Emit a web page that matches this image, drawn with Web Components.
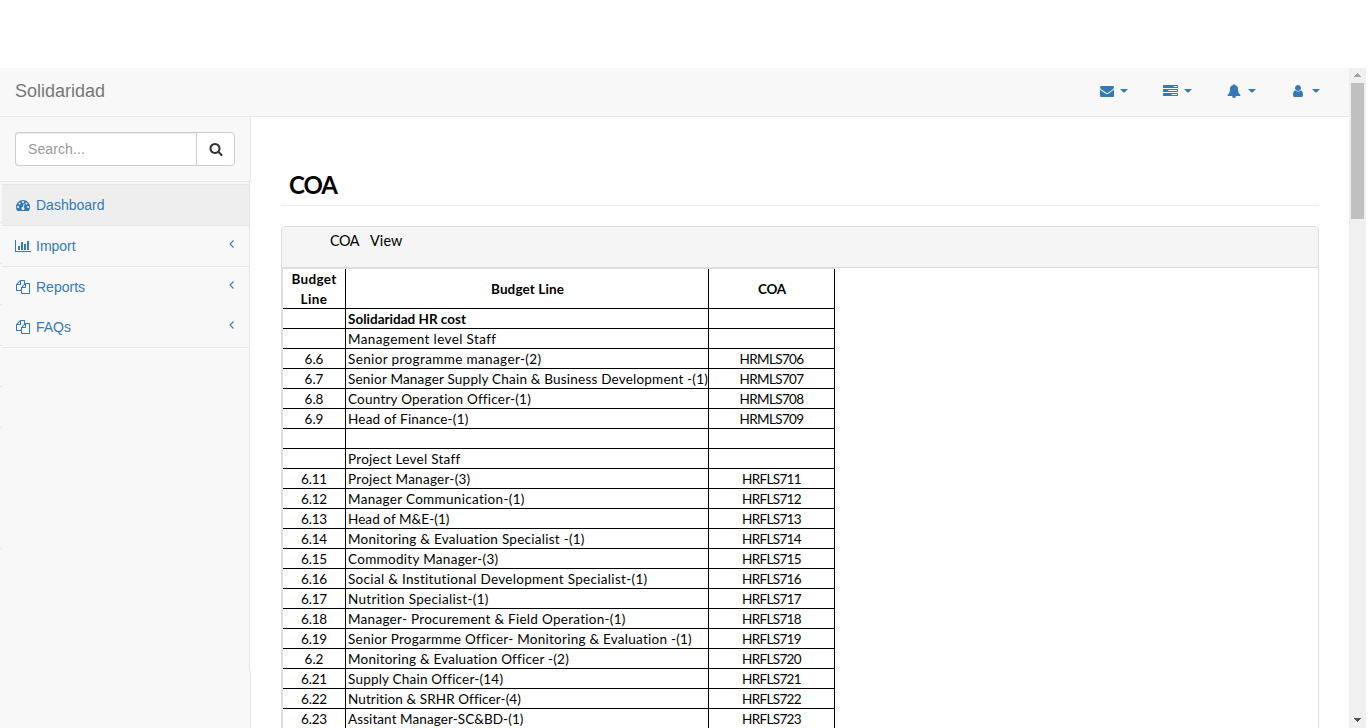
<!DOCTYPE html>
<html lang="en">
<head>
<meta charset="utf-8">
<title>Solidaridad - COA</title>
<style>
html,body{margin:0;height:100%;overflow:hidden;background:#fff}
body{font:14px/20px "Liberation Sans",Arial,sans-serif;color:#333}
</style>
</head>
<body>
<coa-app></coa-app>
<script>
const ICONS = {
  envelope:[1792,'M1792 710v794q0 66-47 113t-113 47h-1472q-66 0-113-47t-47-113v-794q44 49 101 87 362 246 497 345 57 42 92.500 65.500t94.500 48 110 24.500h2q51 0 110-24.500t94.500-48 92.500-65.500q170-123 498-345 57-39 100-87zm0-294q0 79-49 151t-122 123q-376 261-468 325-10 7-42.500 31t-54 38-52 32.500-57.500 27-50 9h-2q-23 0-50-9t-57.500-27-52-32.500-54-38-42.500-31q-91-64-262-182.500t-205-142.500q-62-42-117-115.500t-55-136.500q0-78 41.500-130t118.500-52h1472q65 0 112.500 47t47.500 113z'],
  tasks:[1792,'M1024 1408h640v-128h-640v128zm-384-512h1024v-128h-1024v128zm640-512h384v-128h-384v128zm512 832v256q0 26-19 45t-45 19h-1664q-26 0-45-19t-19-45v-256q0-26 19-45t45-19h1664q26 0 45 19t19 45zm0-512v256q0 26-19 45t-45 19h-1664q-26 0-45-19t-19-45v-256q0-26 19-45t45-19h1664q26 0 45 19t19 45zm0-512v256q0 26-19 45t-45 19h-1664q-26 0-45-19t-19-45v-256q0-26 19-45t45-19h1664q26 0 45 19t19 45z'],
  bell:[1792,'M912 1696q0-16-16-16-59 0-101.500-42.500t-42.500-101.500q0-16-16-16t-16 16q0 73 51.500 124.500t124.500 51.500q16 0 16-16zm816-288q0 52-38 90t-90 38h-448q0 106-75 181t-181 75-181-75-75-181h-448q-52 0-90-38t-38-90q50-42 91-88t85-119.500 74.500-158.500 50-206 19.500-260q0-152 117-282.500t307-158.500q-8-19-8-39 0-40 28-68t68-28 68 28 28 68q0 20-8 39 190 28 307 158.500t117 282.500q0 139 19.500 260t50 206 74.500 158.500 85 119.500 91 88z'],
  user:[1792,'M1536 1399q0 109-62.500 187t-150.500 78h-854q-88 0-150.500-78t-62.500-187q0-85 8.500-160.500t31.500-152 58.500-131 94-89 134.500-34.500q131 128 313 128t313-128q76 0 134.500 34.500t94 89 58.500 131 31.500 152 8.500 160.500zm-256-887q0 159-112.500 271.500t-271.500 112.500-271.500-112.500-112.500-271.500 112.500-271.500 271.500-112.500 271.500 112.500 112.500 271.500z'],
  search:[1792,'M1216 832q0-185-131.500-316.500t-316.500-131.500-316.500 131.500-131.500 316.500 131.500 316.500 316.500 131.500 316.500-131.500 131.500-316.500zm512 832q0 52-38 90t-90 38q-54 0-90-38l-343-342q-179 124-399 124-143 0-273.500-55.500t-225-150-150-225-55.500-273.500 55.500-273.500 150-225 225-150 273.500-55.500 273.500 55.500 225 150 150 225 55.500 273.500q0 220-124 399l343 343q37 37 37 90z'],
  dashboard:[1792,'M384 1152q0-53-37.500-90.500t-90.500-37.500-90.500 37.500-37.500 90.500 37.500 90.500 90.500 37.500 90.500-37.500 37.500-90.500zm192-448q0-53-37.500-90.500t-90.500-37.500-90.500 37.500-37.500 90.500 37.500 90.500 90.500 37.500 90.500-37.500 37.500-90.500zm428 481l101-382q6-26-7.500-48.500t-38.500-29.500-48 6.500-30 39.500l-101 382q-60 5-107 43.500t-63 98.500q-20 77 20 146t117 89 146-20 89-117q16-60-6-117t-72-91zm660-33q0-53-37.500-90.500t-90.500-37.500-90.500 37.500-37.500 90.500 37.500 90.500 90.500 37.500 90.500-37.500 37.500-90.500zm-640-640q0-53-37.500-90.500t-90.500-37.500-90.500 37.500-37.500 90.500 37.500 90.500 90.500 37.500 90.500-37.500 37.500-90.500zm448 192q0-53-37.500-90.500t-90.500-37.500-90.500 37.500-37.500 90.500 37.500 90.500 90.500 37.500 90.500-37.500 37.500-90.500zm320 448q0 261-141 483-19 29-54 29h-1402q-35 0-54-29-141-221-141-483 0-182 71-348t191-286 286-191 348-71 348 71 286 191 191 286 71 348z'],
  chart:[2048,'M640 896v512h-256v-512h256zm384-512v1024h-256v-1024h256zm1024 1152v128h-2048v-1536h128v1408h1920zm-640-896v768h-256v-768h256zm384-384v1152h-256v-1152h256z'],
  files:[1792,'M1696 384q40 0 68 28t28 68v1216q0 40-28 68t-68 28h-960q-40 0-68-28t-28-68v-288h-544q-40 0-68-28t-28-68v-672q0-40 20-88t48-76l408-408q28-28 76-48t88-20h416q40 0 68 28t28 68v328q68-40 128-40h416zm-544 213l-299 299h299v-299zm-640-384l-299 299h299v-299zm196 647l316-316v-416h-384v416q0 40-28 68t-68 28h-416v640h512v-256q0-40 20-88t48-76zm956 804v-1152h-384v416q0 40-28 68t-68 28h-416v640h896z']
};

class FaIcon extends HTMLElement{
  connectedCallback(){
    const [w,d]=ICONS[this.getAttribute('name')];
    this.attachShadow({mode:'open'}).innerHTML=`<style>:host{display:inline-block;width:${w/128}px;height:14px;flex:none}svg{display:block;width:100%;height:100%;fill:currentColor}</style><svg viewBox="0 0 ${w} 1792" preserveAspectRatio="none"><path d="${d}"/></svg>`;
  }
}
customElements.define('fa-icon',FaIcon);

/* Tracks its slotted text to the advance width given in "w". */
class FitText extends HTMLElement{
  connectedCallback(){
    this.attachShadow({mode:'open'}).innerHTML='<style>:host{display:inline-block;white-space:pre}</style><slot></slot>';
    const w=+this.getAttribute('w');
    if(w){
      const n=this.textContent.length;
      const ls=(w-this.getBoundingClientRect().width)/n;
      this.style.letterSpacing=ls.toFixed(3)+'px';
    }
  }
}
customElements.define('fit-text',FitText);

class NavMenu extends HTMLElement{
  connectedCallback(){
    this.attachShadow({mode:'open'}).innerHTML=`<style>
:host{display:flex;flex:none;align-items:center;width:64px;height:46px;color:#337ab7}
i{margin-left:5.5px;border:4.5px solid transparent;border-top-color:currentColor;border-bottom:0}
[name=tasks]{width:15px;margin-left:-1px}
[name=bell]{margin:0 1px 0 -1px}
[name=user]{margin:0 1.500px 0 -1.500px}
</style><fa-icon name="${this.getAttribute('icon')}"></fa-icon><i></i>`;
  }
}
customElements.define('nav-menu',NavMenu);

class TopBar extends HTMLElement{
  connectedCallback(){
    this.attachShadow({mode:'open'}).innerHTML=`<style>
:host{display:flex;justify-content:space-between;box-sizing:border-box;height:49px;background:#f8f8f8;border-bottom:1px solid #e7e7e7}
b{font:18px/20px "Liberation Sans",Arial,sans-serif;color:#777;padding:13px 0 0 15px}
nav{display:flex;width:249px}
</style><b><fit-text w="90">Solidaridad</fit-text></b><nav><nav-menu icon="envelope"></nav-menu><nav-menu icon="tasks"></nav-menu><nav-menu icon="bell"></nav-menu><nav-menu icon="user"></nav-menu></nav>`;
  }
}
customElements.define('top-bar',TopBar);

class SideItem extends HTMLElement{
  connectedCallback(){
    this.attachShadow({mode:'open'}).innerHTML=`<style>
:host{display:flex;box-sizing:border-box;height:41px;margin-left:2px;padding:10px 15px 0 13px;color:#337ab7;border-bottom:1px solid #e7e7e7}
:host([active]){background:#eee}
:host([plain]){border-bottom:0;height:40px}
fa-icon{margin-top:3px}
.box{width:21px;display:flex}
span{flex:1}
svg{width:5px;height:8px;margin:4px 0 0;fill:none;stroke:currentColor;stroke-width:1.1}
</style><div class="box"><fa-icon name="${this.getAttribute('icon')}"></fa-icon></div><span><slot></slot></span>${this.hasAttribute('active')?'':'<svg viewBox="0 0 5 8"><path d="M4.500.5L1 4l3.500 3.500"/></svg>'}`;
    if(this.getAttribute('icon')!=='chart')this.shadowRoot.querySelector('fa-icon').style.marginLeft='1px';
  }
}
customElements.define('side-item',SideItem);

class SideBar extends HTMLElement{
  connectedCallback(){
    const stubs=[222,263,304,345,386,427,548];
    this.attachShadow({mode:'open'}).innerHTML=`<style>
:host{display:block;position:relative;width:251px;box-sizing:border-box;background:linear-gradient(#f8f8f8,#f8f8f8) 0 0/249px 100% no-repeat}
.search{display:flex;box-sizing:border-box;height:65px;padding:15px 15px;background:#f8f8f8;border-bottom:1px solid #e7e7e7;border-right:1px solid #e7e7e7}
.input{flex:1;box-sizing:border-box;height:34px;border:1px solid #ccc;border-right:0;border-radius:4px 0 0 4px;background:#fff;padding:6px 12px;color:#999;box-shadow:inset 0 1px 1px rgba(0,0,0,.075)}
.btn{display:flex;box-sizing:border-box;width:39px;height:34px;border:1px solid #ccc;border-radius:0 4px 4px 0;background:#fff;color:#333;padding:9px 11.500px}
.menu{box-sizing:border-box;width:250px;height:489px;border-right:1px solid #e7e7e7;padding-top:2px}
.line{height:1px;margin-left:2px;background:#e7e7e7}
.tail{box-sizing:border-box;width:251px;height:57px;background:#f8f8f8;border-right:1px solid #e7e7e7}
i{position:absolute;left:0;width:2px;height:1px;background:#e7e7e7}
</style>
<div class="search"><div class="input"><fit-text w="57">Search...</fit-text></div><div class="btn"><fa-icon name="search"></fa-icon></div></div>
<div class="menu"><div class="line"></div>
<side-item icon="dashboard" active>Dashboard</side-item>
<side-item icon="chart">Import</side-item>
<side-item icon="files" plain>Reports</side-item>
<side-item icon="files">FAQs</side-item></div>
<div class="tail"></div>
${stubs.map(y=>`<i style="top:${y-117}px"></i>`).join('')}`;
  }
}
customElements.define('side-bar',SideBar);

const ROWS=[
['','Solidaridad HR cost',118,''],['','Management level Staff',148,''],
['6.6','Senior programme manager-(2)',193.5,'HRMLS706'],
['6.7','Senior Manager Supply Chain & Business Development -(1)',360,'HRMLS707'],
['6.8','Country Operation Officer-(1)',182.5,'HRMLS708'],
['6.9','Head of Finance-(1)',120.5,'HRMLS709'],
['','',0,''],['','Project Level Staff',112,''],
['6.11','Project Manager-(3)',122.5,'HRFLS711'],
['6.12','Manager Communication-(1)',177,'HRFLS712'],
['6.13','Head of M&E-(1)',101.5,'HRFLS713'],
['6.14','Monitoring & Evaluation Specialist -(1)',237,'HRFLS714'],
['6.15','Commodity Manager-(3)',150.5,'HRFLS715'],
['6.16','Social & Institutional Development Specialist-(1)',300,'HRFLS716'],
['6.17','Nutrition Specialist-(1)',141,'HRFLS717'],
['6.18','Manager- Procurement & Field Operation-(1)',278,'HRFLS718'],
['6.19','Senior Progarmme Officer- Monitoring & Evaluation -(1)',343.5,'HRFLS719'],
['6.2','Monitoring & Evaluation Officer -(2)',220.5,'HRFLS720'],
['6.21','Supply Chain Officer-(14)',154.5,'HRFLS721'],
['6.22','Nutrition & SRHR Officer-(4)',172.5,'HRFLS722'],
['6.23','Assitant Manager-SC&BD-(1)',175.5,'HRFLS723']];

class BudgetTable extends HTMLElement{
  connectedCallback(){
    const esc=s=>s.replace(/&/g,'&amp;');
    const fit=(s,w)=>s?`<fit-text w="${w}">${esc(s)}</fit-text>`:'';
    this.attachShadow({mode:'open'}).innerHTML=`<style>
:host{display:block;width:552px;margin:1px 0 0 1px;font:13.500px/19px Lato,Carlito,sans-serif;color:#000}
.row{display:grid;grid-template-columns:63px 363px 126px;height:20px}
.row>div{box-sizing:border-box;border-right:1px solid #000;border-bottom:1px solid #000;overflow:hidden;white-space:nowrap;text-align:center;padding-top:1px}
.row>.name{text-align:left;padding-left:2px}
.head{height:40px;font-weight:700}
.head>div{line-height:20px;padding-top:0}
.head>div+div{padding:10px 0 0 1px}
.strong{font-weight:700}
</style>
<div class="row head"><div>${fit('Budget',45)}<br>${fit('Line',27)}</div><div>${fit('Budget Line',73)}</div><div>${fit('COA',28)}</div></div>
${ROWS.map((r,i)=>`<div class="row${i?'':' strong'}"><div>${fit(r[0],r[0].length>3?26:19)}</div><div class="name">${fit(r[1],r[2])}</div><div>${fit(r[3],r[3].startsWith('HRM')?64:59)}</div></div>`).join('')}`;
  }
}
customElements.define('budget-table',BudgetTable);

class CoaPanel extends HTMLElement{
  connectedCallback(){
    this.attachShadow({mode:'open'}).innerHTML=`<style>
:host{display:block;box-sizing:border-box;height:600px;border:1px solid #ddd;border-radius:4px 4px 0 0;overflow:hidden}
.heading{box-sizing:border-box;height:41px;background:#f5f5f5;border-bottom:1px solid #ddd;padding:4px 0 0 48px;font:14.400px/20px Lato,Carlito,sans-serif;color:#000;display:flex;gap:11px}
.body{width:553px;box-shadow:inset 1px 1px #ddd;display:flow-root}
</style><div class="heading"><fit-text w="29">COA</fit-text><fit-text w="32.5">View</fit-text></div><div class="body"><slot></slot></div>`;
  }
}
customElements.define('coa-panel',CoaPanel);

class ScrollBar extends HTMLElement{
  connectedCallback(){
    this.attachShadow({mode:'open'}).innerHTML=`<style>
:host{display:flex;flex-direction:column;align-items:center;width:17px;background:#f0f0f0}
svg{display:block;width:17px;height:15px}
.thumb{width:13px;height:136px;background:#c0c0c0}
.down{margin-top:auto;margin-bottom:1px}
</style><svg viewBox="0 0 17 15"><path fill="#a3a3a3" d="M8 5h1v1h1v1h1v1h1v1H5V8h1V7h1V6h1z"/></svg><div class="thumb"></div><svg class="down" viewBox="0 0 17 15"><path fill="#505050" d="M5 6h7v1h-1v1h-1v1H9v1H8V9H7V8H6V7H5z"/></svg>`;
  }
}
customElements.define('scroll-bar',ScrollBar);

class CoaApp extends HTMLElement{
  connectedCallback(){
    this.attachShadow({mode:'open'}).innerHTML=`<style>
:host{display:flex;box-sizing:border-box;height:728px;padding:68px 6px 0 0;overflow:hidden}
.page{flex:1;min-width:0;height:660px;overflow:hidden}
.cols{display:flex;height:611px}
main{flex:1;padding:0 30px;overflow:hidden}
h1{box-sizing:border-box;height:89px;margin:0 0 20px;padding:52px 0 0 8px;border-bottom:1px solid #eee;font:700 24px/32px Lato,Carlito,sans-serif;color:#000}
</style><div class="page"><top-bar></top-bar><div class="cols"><side-bar></side-bar><main><h1><fit-text w="48">COA</fit-text></h1><coa-panel><budget-table></budget-table></coa-panel></main></div></div><scroll-bar></scroll-bar>`;
  }
}
customElements.define('coa-app',CoaApp);
</script>
</body>
</html>
